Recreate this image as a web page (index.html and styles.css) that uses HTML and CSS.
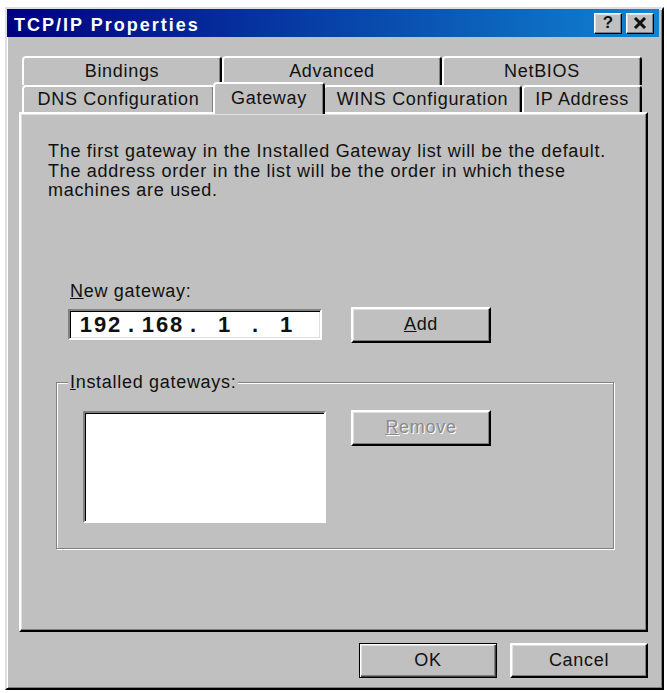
FILE: index.html
```html
<!DOCTYPE html>
<html lang="en">
<head>
<meta charset="utf-8">
<title>TCP/IP Properties</title>
<link rel="stylesheet" href="styles.css">
</head>
<body>
<div class="window">
  <div class="titlebar">
    <span class="title">TCP/IP Properties</span>
    <div class="tbtns">
      <div class="tbtn help">?</div>
      <div class="tbtn close">
        <svg width="14" height="12" viewBox="0 0 14 12"><path d="M2 1 L12 11 M12 1 L2 11" stroke="#111" stroke-width="3" fill="none"/></svg>
      </div>
    </div>
  </div>
  <div class="content">
    <div class="tabs">
      <div class="tabrow">
        <div class="tab w200">Bindings</div>
        <div class="tab w220">Advanced</div>
        <div class="tab w200">NetBIOS</div>
      </div>
      <div class="tabrow">
        <div class="tab w193">DNS Configuration</div>
        <div class="tab selected">Gateway</div>
        <div class="tab w199">WINS Configuration</div>
        <div class="tab w120">IP Address</div>
      </div>
    </div>
    <div class="panel">
      <p class="intro">The first gateway in the Installed Gateway list will be the default.<br>The address order in the list will be the order in which these<br>machines are used.</p>
      <div class="label"><u>N</u>ew gateway:</div>
      <div class="entry-row">
        <div class="ipbox">
          <span class="ipf">192</span><span class="ipdot">.</span><span class="ipf">168</span><span class="ipdot">.</span><span class="ipf">1</span><span class="ipdot">.</span><span class="ipf">1</span>
        </div>
        <div class="btn add"><span><u>A</u>dd</span></div>
      </div>
      <div class="group">
        <span class="group-label"><u>I</u>nstalled gateways:</span>
        <div class="group-row">
          <div class="listbox"></div>
          <div class="btn remove disabled"><span><u>R</u>emove</span></div>
        </div>
      </div>
    </div>
    <div class="footer">
      <div class="btn default">OK</div>
      <div class="btn">Cancel</div>
    </div>
  </div>
</div>
</body>
</html>
```

FILE: styles.css
```css
* { box-sizing: border-box; }
html, body { margin: 0; padding: 0; background: #ffffff; }
body {
  font-family: "Liberation Sans", Arial, sans-serif;
  font-size: 18px;
  letter-spacing: 0.7px;
  color: #111;
}
.window {
  margin: 7px 0 0 5px;
  width: 659px;
  height: 683px;
  background: #c0c0c0;
  border: 2px solid;
  border-color: #dfdfdf #000 #000 #dfdfdf;
  box-shadow: inset 1px 1px #fff, inset -1px -1px #808080;
  display: flex;
  flex-direction: column;
}
.titlebar {
  height: 28px;
  margin-right: 3px;
  background: linear-gradient(90deg, #000080 0%, #1084d0 100%);
  display: flex;
  align-items: center;
  justify-content: space-between;
}
.title {
  color: #fff;
  font-weight: bold;
  letter-spacing: 2px;
  padding: 3px 0 0 7px;
  line-height: 24px;
}
.tbtns { display: flex; gap: 4px; margin-right: 5px; }
.tbtn {
  width: 28px;
  height: 21px;
  background: #c0c0c0;
  border: 1px solid;
  border-color: #fff #000 #000 #fff;
  box-shadow: inset -1px -1px #808080, inset 1px 1px #dfdfdf;
  display: flex;
  align-items: center;
  justify-content: center;
  font-weight: bold;
  font-size: 17px;
  letter-spacing: 0;
  color: #111;
}
.content {
  flex: 1;
  display: flex;
  flex-direction: column;
  padding: 19px 14px 0 12px;
}
.tabs { margin: 0 6px 0 3px; }
.tabrow { display: flex; }
.tabrow:first-child { height: 29px; }
.tabrow:last-child { height: 27px; }
.tab {
  background: #c0c0c0;
  border: 2px solid;
  border-bottom: 0;
  border-color: #fff #000 transparent #fff;
  border-radius: 4px 4px 0 0;
  box-shadow: inset -1px 0 #808080;
  display: flex;
  align-items: center;
  justify-content: center;
  white-space: nowrap;
}
.w200 { width: 200px; }
.w220 { width: 220px; }
.w193 { width: 193px; }
.w199 { width: 199px; }
.w120 { width: 120px; }
.tab.selected {
  width: 112px;
  margin: -3px -2px -2px -2px;
  position: relative;
  z-index: 2;
  padding-bottom: 2px;
}
.panel {
  height: 520px;
  border: 2px solid;
  border-color: #fff #000 #000 #fff;
  box-shadow: inset -1px -1px #808080, inset 1px 1px #dfdfdf;
}
.intro {
  margin: 28px 0 0 27px;
  line-height: 19.5px;
}
.label {
  margin: 80px 0 0 49px;
  line-height: 20px;
}
.entry-row {
  display: flex;
  align-items: center;
  margin: 6px 0 0 47px;
  height: 36px;
}
.ipbox {
  width: 254px;
  height: 31px;
  background: #fff;
  border: 2px solid;
  border-color: #808080 #fff #fff #808080;
  box-shadow: inset 1px 1px #000, inset -1px -1px #dfdfdf;
  display: flex;
  align-items: center;
  padding-left: 5px;
  font-weight: bold;
  font-size: 22px;
  letter-spacing: 2px;
  color: #111;
}
.ipf { width: 52px; text-align: center; }
.ipdot { width: 10px; text-align: center; }
.btn {
  width: 140px;
  height: 36px;
  background: #c0c0c0;
  border: 2px solid;
  border-color: #fff #000 #000 #fff;
  box-shadow: inset -1px -1px #808080, inset 1px 1px #dfdfdf;
  display: flex;
  align-items: center;
  justify-content: center;
}
.add { margin-left: 29px; }
.group {
  margin: 39px 0 0 35px;
  width: 558px;
  height: 167px;
  border: 1px solid #808080;
  box-shadow: 1px 1px 0 #fff, inset 1px 1px 0 #fff;
  padding-left: 11px;
}
.group-label {
  display: block;
  width: max-content;
  margin-top: -11px;
  padding: 0 2px;
  background: #c0c0c0;
  line-height: 20px;
}
.group-row {
  display: flex;
  align-items: flex-start;
  margin: 19px 0 0 15px;
}
.listbox {
  width: 243px;
  height: 112px;
  background: #fff;
  border: 2px solid;
  border-color: #808080 #fff #fff #808080;
  box-shadow: inset 1px 1px #000;
}
.remove { margin: -1px 0 0 25px; }
.disabled { color: #8a8a8a; text-shadow: 1px 1px 0 #fff; }
.footer {
  display: flex;
  justify-content: flex-end;
  gap: 13px;
  margin-top: 11px;
}
.footer .btn { width: 138px; height: 35px; }
.btn.default {
  border: 1px solid #000;
  box-shadow: inset 1px 1px #fff, inset -1px -1px #404040, inset -2px -2px #808080, inset 2px 2px #dfdfdf;
}
```
